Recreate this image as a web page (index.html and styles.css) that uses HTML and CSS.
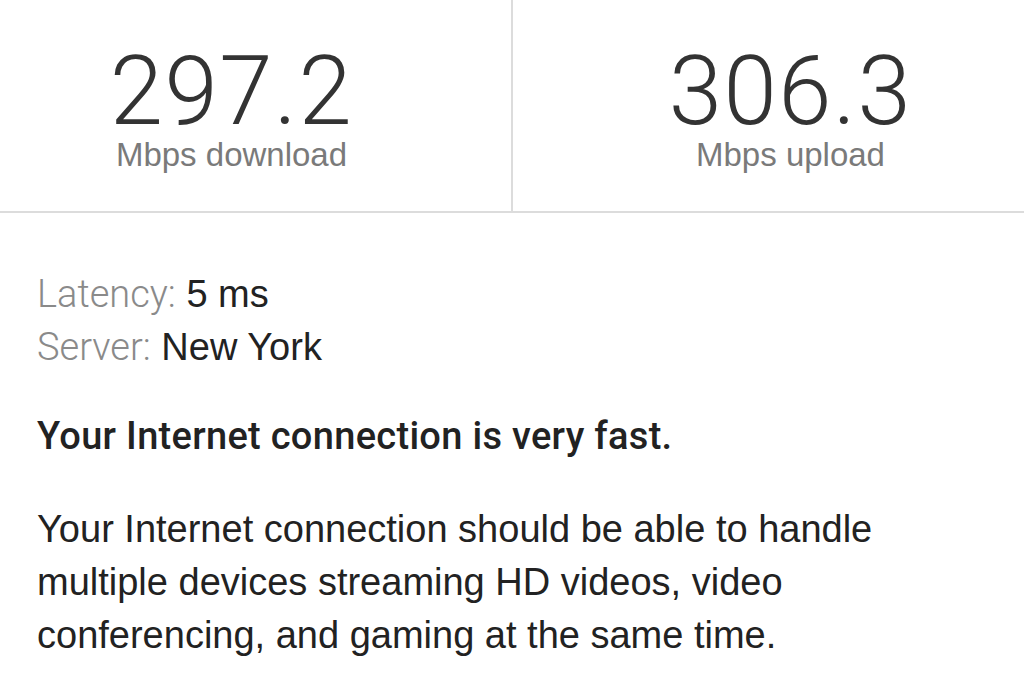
FILE: index.html
```html
<!DOCTYPE html>
<html lang="en">
<head>
<meta charset="utf-8">
<title>Speed test result</title>
<link rel="stylesheet" href="styles.css">
</head>
<body>
<main class="result">
  <section class="speeds">
    <div class="speed speed-down">
      <div class="speed-value">297.2</div>
      <div class="speed-label">Mbps download</div>
    </div>
    <div class="speed speed-up">
      <div class="speed-value">306.3</div>
      <div class="speed-label">Mbps upload</div>
    </div>
  </section>
  <section class="details">
    <div class="meta">
      <div class="meta-row"><span class="meta-key">Latency:</span> <span class="meta-val">5 ms</span></div>
      <div class="meta-row"><span class="meta-key">Server:</span> <span class="meta-val">New York</span></div>
    </div>
    <h2 class="verdict">Your Internet connection is very fast.</h2>
    <p class="explain">Your Internet connection should be able to handle multiple devices streaming HD videos, video conferencing, and gaming at the same time.</p>
  </section>
</main>
</body>
</html>
```
FILE: styles.css
```css
html, body {
  margin: 0;
  padding: 0;
  background: #ffffff;
}
body {
  font-family: "Liberation Sans", Arial, sans-serif;
  color: #222222;
}
.speeds {
  display: grid;
  grid-template-columns: 513px 1fr;
  border-bottom: 2px solid #dcdcdc;
}
.speed {
  display: flex;
  flex-direction: column;
  align-items: center;
  padding: 46px 0 37px;
}
.speed-down {
  border-right: 2px solid #dcdcdc;
  padding-right: 48px;
}
.speed-up {
  padding-left: 44px;
}
.speed-value {
  font-family: Roboto, "Liberation Sans", sans-serif;
  font-weight: 300;
  font-size: 96px;
  letter-spacing: 1.5px;
  line-height: 90px;
  color: #333333;
}
.speed-label {
  font-size: 33px;
  line-height: 38px;
  color: #7a7a7a;
}
.details {
  padding: 55px 37px 0;
}
.meta-row {
  font-size: 38px;
  line-height: 53px;
}
.meta-key {
  font-family: Roboto, "Liberation Sans", sans-serif;
  font-weight: 300;
  color: #8a8a8a;
}
.meta-val {
  color: #222222;
}
.verdict {
  margin: 36px 0 0;
  font-family: Roboto, "Liberation Sans", sans-serif;
  font-weight: 500;
  font-size: 38px;
  letter-spacing: 0.3px;
  line-height: 53px;
  color: #222222;
}
.explain {
  margin: 40px 0 0;
  font-size: 38px;
  line-height: 53px;
  color: #222222;
  max-width: 860px;
}
```
